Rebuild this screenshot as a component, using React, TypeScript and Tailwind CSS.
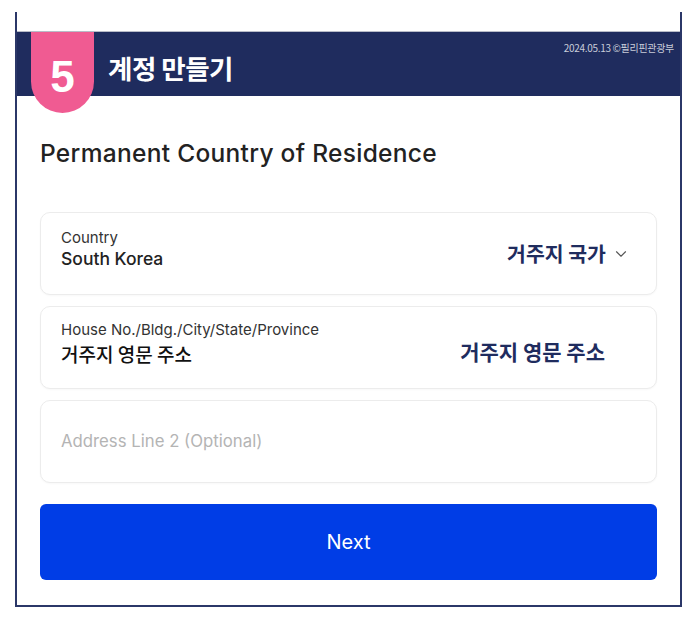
import { ChevronDown } from 'lucide-react'

const sans = "font-['Inter','Noto_Sans_CJK_KR',sans-serif]"
const kr = "font-['Noto_Sans_CJK_KR',sans-serif]"

function FieldCard({ children }: { children: React.ReactNode }) {
  return (
    <div className="flex h-[83px] rounded-[10px] border border-[#ececec] bg-white pl-[20px] pr-[28px] shadow-[0_1px_2px_rgba(0,0,0,0.03)]">
      {children}
    </div>
  )
}

export default function App() {
  return (
    <div className={`min-h-[619px] bg-white pt-[12px] ${sans}`}>
      <div className="relative ml-[15px] w-[667px] border-x-2 border-b-2 border-[#2b3768] bg-white">
        <div className="h-[20px] border-b border-[#b8bcc8]" />
        <header className="flex h-[64px] items-center justify-between bg-[#1f2c5e] pl-[91px] pr-[6px]">
          <h1 className={`pt-[8px] text-[26.5px] font-bold tracking-[-0.5px] text-white ${kr}`}>
            계정 만들기
          </h1>
          <span className={`self-start pt-[8px] text-[10px] tracking-[-0.3px] text-[#c9cdd9] ${kr}`}>
            2024.05.13 ©필리핀관광부
          </span>
        </header>
        <div className="absolute left-[14px] top-[20px] flex h-[81px] w-[63px] items-end justify-center rounded-b-[32px] bg-[#f05b92] pb-[14px]">
          <span className="font-['Liberation_Sans',sans-serif] text-[44px] font-bold leading-none text-white">
            5
          </span>
        </div>

        <div className="px-[23px] pb-[25px]">
          <h2 className="pt-[41px] text-[24.5px] font-medium leading-[32px] tracking-[0.3px] text-[#222]">
            Permanent Country of Residence
          </h2>

          <div className="mt-[43px] flex flex-col gap-[11px]">
            <FieldCard>
              <div className="flex flex-1 flex-col pt-[15px]">
                <span className="text-[15px] leading-[20px] text-[#333]">Country</span>
                <span className="text-[17.5px] font-medium leading-[22px] text-[#222]">South Korea</span>
              </div>
              <div className="-mr-[2px] flex items-center gap-[6px] self-start pt-[25px]">
                <span className={`text-[20.5px] font-bold leading-[30px] text-[#1f2c5e] ${kr}`}>거주지 국가</span>
                <ChevronDown className="mt-[2px] h-[18px] w-[18px] text-[#555]" strokeWidth={1.5} />
              </div>
            </FieldCard>

            <FieldCard>
              <div className="flex flex-1 flex-col pt-[13px]">
                <span className="text-[15px] leading-[20px] text-[#333]">
                  House No./Bldg./City/State/Province
                </span>
                <span className={`text-[19px] font-medium leading-[28px] text-[#111] ${kr}`}>
                  거주지 영문 주소
                </span>
              </div>
              <span className={`self-start pt-[28px] pr-[23px] text-[21px] font-bold leading-[32px] text-[#1f2c5e] ${kr}`}>
                거주지 영문 주소
              </span>
            </FieldCard>

            <FieldCard>
              <span className="self-center text-[16.75px] text-[#b4b4b4]">Address Line 2 (Optional)</span>
            </FieldCard>
          </div>

          <button className="mt-[21px] flex h-[76px] w-full items-center justify-center rounded-[6px] bg-[#003de6] text-[20px] text-white">
            Next
          </button>
        </div>
      </div>
    </div>
  )
}
